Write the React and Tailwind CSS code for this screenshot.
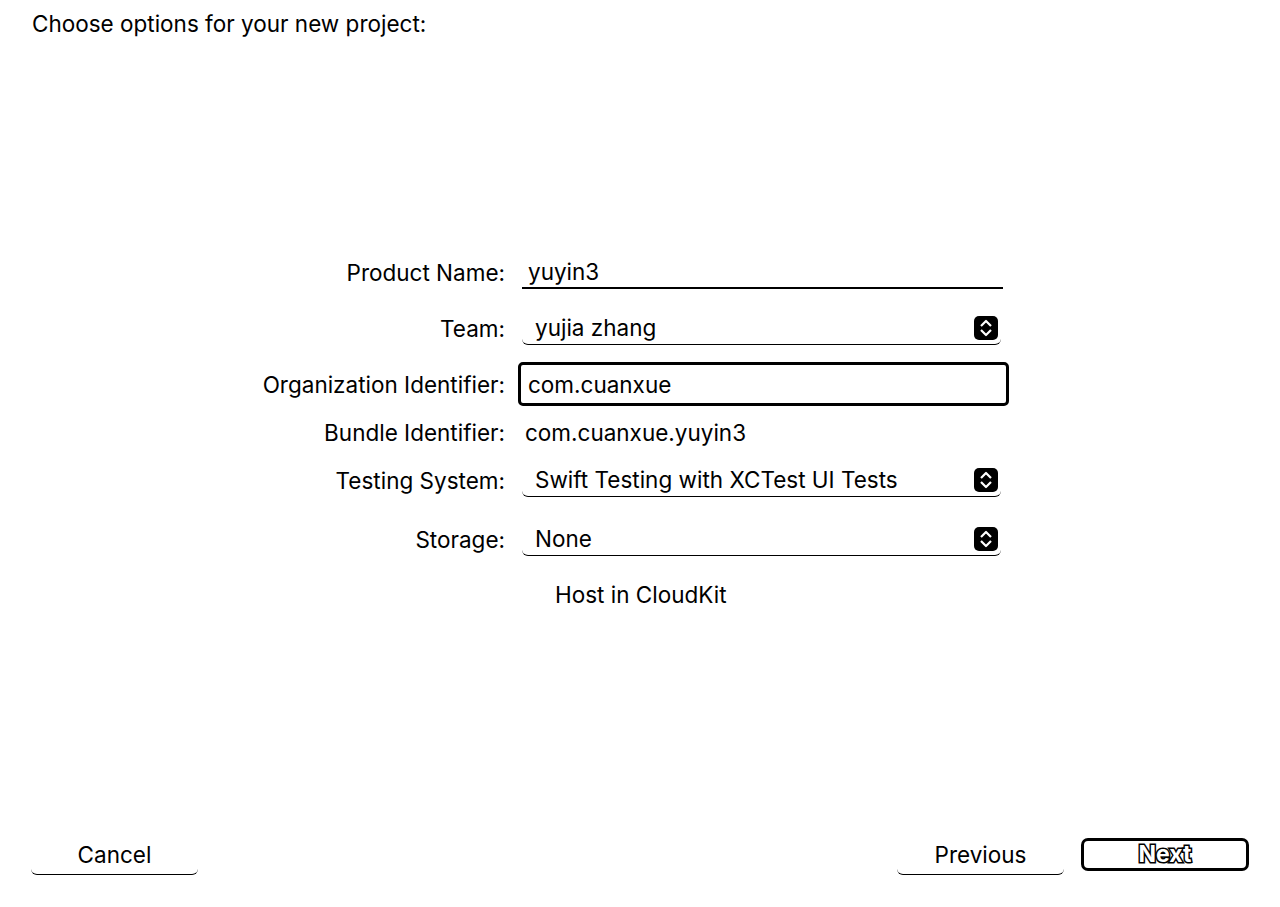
import React from "react";

function PopupIcon() {
  return (
    <svg width="26" height="26" viewBox="0 0 26 26" className="shrink-0">
      <rect x="1" y="1" width="24" height="24" rx="5" fill="black" />
      <path d="M8 11 L13 6 L18 11" stroke="white" strokeWidth="2.2" fill="none" strokeLinejoin="round" />
      <path d="M8 15 L13 20 L18 15" stroke="white" strokeWidth="2.2" fill="none" strokeLinejoin="round" />
    </svg>
  );
}

function Label({ children }) {
  return <div className="w-[505px] shrink-0 text-right">{children}</div>;
}

function Popup({ value }) {
  return (
    <div className="ml-[17px] w-[479px] h-[34px] flex items-center justify-between border-b border-black rounded-b-[6px] pl-[13px] pr-[2px]">
      <span>{value}</span>
      <PopupIcon />
    </div>
  );
}

export default function App() {
  return (
    <div className="h-[907px] w-[1280px] bg-white text-black flex flex-col font-['Inter','Liberation_Sans',sans-serif] text-[22.5px] leading-[27px]">
      <div className="pl-[32px] pt-[10px]">Choose options for your new project:</div>

      <div className="mt-[215px] flex flex-col">
        <div className="h-[40px] flex items-center">
          <Label>Product Name:</Label>
          <div className="ml-[17px] w-[481px] h-[34px] flex items-center border-b-2 border-black pl-[6px]">yuyin3</div>
        </div>

        <div className="mt-[16px] h-[40px] flex items-center">
          <Label>Team:</Label>
          <Popup value="yujia zhang" />
        </div>

        <div className="mt-[14px] h-[44px] flex items-center">
          <Label>Organization Identifier:</Label>
          <div className="ml-[13px] w-[491px] h-[44px] flex items-center border-[3px] border-black rounded-[5px] pl-[7px]">com.cuanxue</div>
        </div>

        <div className="mt-[6px] h-[40px] flex items-center">
          <Label>Bundle Identifier:</Label>
          <div className="ml-[20px]">com.cuanxue.yuyin3</div>
        </div>

        <div className="mt-[8px] h-[40px] flex items-center">
          <Label>Testing System:</Label>
          <Popup value="Swift Testing with XCTest UI Tests" />
        </div>

        <div className="mt-[19px] h-[40px] flex items-center">
          <Label>Storage:</Label>
          <Popup value="None" />
        </div>

        <div className="mt-[15px] h-[40px] flex items-center">
          <Label />
          <div className="ml-[28px] w-[22px] h-[22px] rounded-[5px] bg-white" />
          <span>Host in CloudKit</span>
        </div>
      </div>

      <div className="mt-auto pb-[32px] px-[31px] flex items-end">
        <button className="w-[167px] h-[37px] pb-[4px] border-b border-black rounded-b-[6px] flex items-center justify-center">Cancel</button>
        <div className="flex-1" />
        <button className="w-[167px] h-[37px] pb-[4px] border-b border-black rounded-b-[6px] flex items-center justify-center">Previous</button>
        <button className="ml-[17px] mb-[4px] w-[168px] h-[33px] border-[3px] border-black rounded-[7px] flex items-center justify-center font-bold text-[23px] text-white [-webkit-text-stroke:3px_black] [paint-order:stroke_fill]">Next</button>
      </div>
    </div>
  );
}
